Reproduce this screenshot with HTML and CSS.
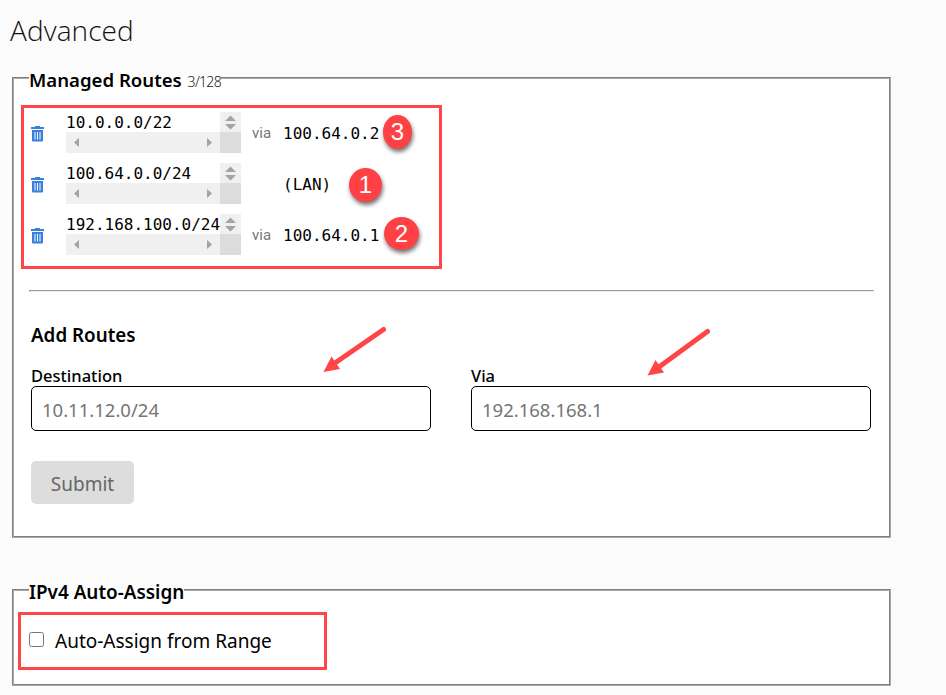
FILE: index.html
```html
<!DOCTYPE html>
<html lang="en">
<head>
<meta charset="utf-8">
<title>Advanced</title>
<link rel="stylesheet" href="styles.css">
</head>
<body>
<svg width="0" height="0" class="defs">
  <symbol id="trash" viewBox="0 0 13 16"><path fill="#3880dc" fill-rule="evenodd" d="M4 0h5v1h4v2H0V1h4zM1 4h11v10.500q0 1-1 1H2q-1 0-1-1zM3.500 6v7.500h1V6zM6 6v7.500h1V6zM8.500 6v7.500h1V6z"/></symbol>
  <symbol id="bars" viewBox="0 0 175 41"><path fill="#f0f0f0" d="M154 0h21v20h-21zM0 20h154v21H0z"/><path fill="#dcdcdc" d="M154 20h21v21h-21z"/><path fill="#a3a3a3" d="M159 9l5.500-5.500L170 9zM159 12h11l-5.500 5.500zM13 26v9l-5-4.500zM141 26v9l5-4.500z"/></symbol>
</svg>
<main class="page">
  <h1 class="title">Advanced</h1>
  <fieldset class="panel routes">
    <legend class="legend managed">Managed Routes <span class="count">3/128</span></legend>
    <div class="route">
      <svg class="trash"><use href="#trash"/></svg>
      <div class="target"><svg class="bars"><use href="#bars"/></svg><span>10.0.0.0/22</span></div>
      <span class="via">via</span><span class="gateway">100.64.0.2</span>
    </div>
    <div class="route">
      <svg class="trash"><use href="#trash"/></svg>
      <div class="target"><svg class="bars"><use href="#bars"/></svg><span>100.64.0.0/24</span></div>
      <span class="via"></span><span class="gateway">(LAN)</span>
    </div>
    <div class="route">
      <svg class="trash"><use href="#trash"/></svg>
      <div class="target"><svg class="bars"><use href="#bars"/></svg><span>192.168.100.0/24</span></div>
      <span class="via">via</span><span class="gateway">100.64.0.1</span>
    </div>
    <hr class="rule">
    <form class="add">
      <h2 class="add-title">Add Routes</h2>
      <div class="fields">
        <label class="field"><span>Destination</span><input type="text" placeholder="10.11.12.0/24"></label>
        <label class="field"><span>Via</span><input type="text" placeholder="192.168.168.1"></label>
      </div>
      <button class="submit" type="button" disabled>Submit</button>
    </form>
  </fieldset>
  <fieldset class="panel assign">
    <legend class="legend ipv4">IPv4 Auto-Assign</legend>
    <label class="check"><input type="checkbox"><span>Auto-Assign from Range</span></label>
  </fieldset>
</main>
<svg class="arrows" width="946" height="695">
  <g fill="none" stroke="#ff4545" stroke-width="5" stroke-linecap="round"><path d="M383.500 329.500L335 363M707.500 331.500L659 367"/></g>
  <path fill="#ff4545" d="M323.500 372l8-15.500 8.500 12.500zM647.500 375.500l8-15.500 8.500 12.500z"/>
</svg>
<div class="outline outline-routes"></div>
<div class="outline outline-assign"></div>
<div class="badge b3">3</div>
<div class="badge b1">1</div>
<div class="badge b2">2</div>
</body>
</html>
```
FILE: styles.css
```css
* { box-sizing: border-box; }
body { margin: 0; height: 695px; position: relative; overflow: hidden; background: #fbfbfb; color: #000; font: 18px/28px "Noto Sans", "Open Sans", sans-serif; }
.defs { position: absolute; }
.page { width: 879px; margin-left: 12px; }
.title { margin: 0 0 0 -2px; padding-top: 10px; height: 64px; font: 300 28px/40px "Open Sans", sans-serif; letter-spacing: .1px; color: #111; }
.panel { margin: 0; padding: 0 16px; min-width: 0; border: 1px solid; border-color: #808080 #a9a9a9 #a9a9a9 #808080; box-shadow: inset 1px 1px #a9a9a9, inset -1px -1px #808080; background: #fff; }
.routes { height: 474px; }
.legend { position: relative; padding: 4px 0 0; height: 26px; line-height: 24px; font-weight: 600; white-space: nowrap; background: linear-gradient(transparent 50%, #fff 50%); }
.managed { font-size: 18.600px; }
.ipv4 { font-size: 18.900px; }
.count { font-weight: 300; font-size: 14px; letter-spacing: -.7px; margin-left: 1px; color: #222; }
.route { display: flex; height: 41px; margin: 0 0 10px; align-items: center; }
.legend + .route { margin-top: 22px; }
.trash { width: 13px; height: 16px; margin: 2px 22px 0 2px; }
.target { width: 175px; height: 41px; position: relative; font: 16px/22px "DejaVu Sans Mono", monospace; }
.target span { position: relative; }
.bars { position: absolute; left: 0; top: 0; width: 175px; height: 41px; }
.via { width: 42px; padding: 1px 0 0 11px; font: 15px/20px Roboto, sans-serif; color: #777; }
.gateway { margin-top: 2px; font: 16px/20px "DejaVu Sans Mono", monospace; }
.rule { margin: 35px 0 0; border: 1px solid; border-color: #9a9a9a #eee #eee #9a9a9a; height: 2px; }
.add { padding: 29px 2px 0; }
.add-title { margin: 0; font: 600 18.800px/28px "Noto Sans", sans-serif; }
.fields { display: flex; gap: 40px; margin-top: 17px; }
.field { display: flex; flex-direction: column; width: 400px; font-weight: 500; font-size: 16.500px; line-height: 20px; }
.field input { height: 45px; border: 1px solid #000; border-radius: 5px; padding: 2px 10px 0; font: 18.500px "Noto Sans", sans-serif; }
.field input::placeholder { color: #757575; }
.submit { display: block; margin-top: 30px; width: 103px; height: 43px; padding: 2px 0 0; border: 0; border-radius: 5px; background: #ddd; color: #666; font: 19px "Noto Sans", sans-serif; }
.assign { margin-top: 38px; height: 110px; }
.check { display: flex; align-items: center; margin-top: 25px; font-size: 19px; }
.check input { width: 15px; height: 15px; margin: 0 11px 3px 0; }
.arrows { position: absolute; left: 0; top: 0; }
.outline { position: absolute; border: 3px solid #ff4545; }
.outline-routes { left: 21px; top: 105px; width: 421px; height: 164px; }
.outline-assign { left: 18px; top: 612px; width: 309px; height: 58px; }
.badge { position: absolute; height: 34px; border-radius: 50%; background: #ff4045; box-shadow: 1px 3px 4px rgba(0,0,0,.55); color: #fff; text-align: center; font: 24px/34px "Liberation Sans", sans-serif; }
.b3 { left: 383px; top: 115px; width: 29px; }
.b1 { left: 349px; top: 168px; width: 33px; }
.b2 { left: 384px; top: 217px; width: 35px; height: 33px; }
```
